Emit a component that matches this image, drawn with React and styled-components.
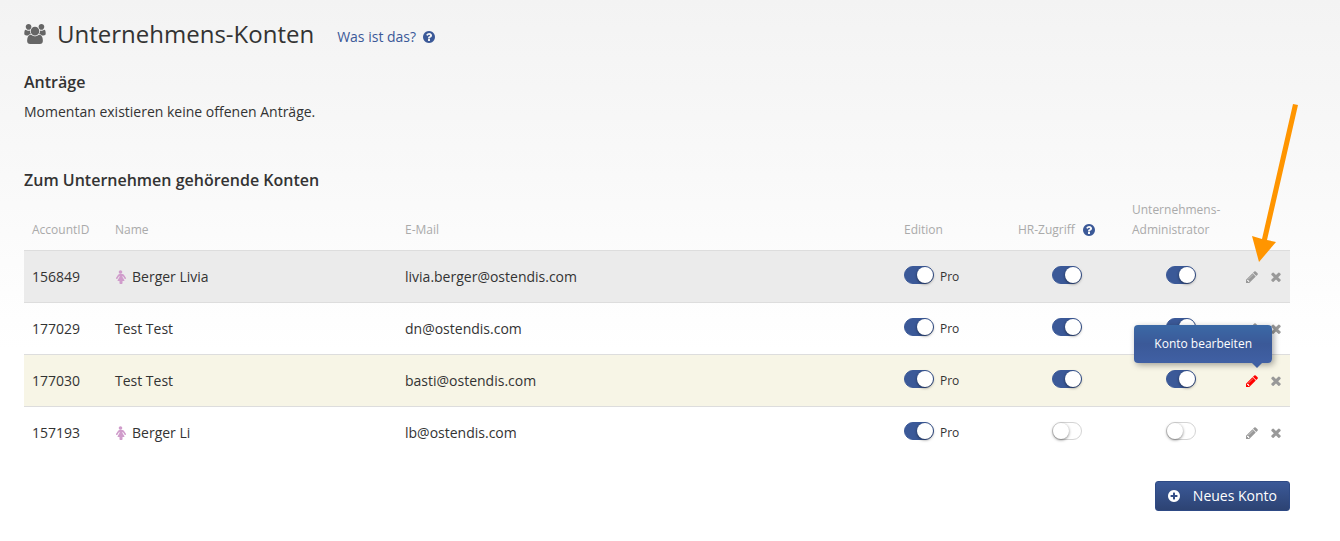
import React, { useState } from "react";
import styled, { createGlobalStyle } from "styled-components";

const GlobalStyle = createGlobalStyle`
  *, *::before, *::after { box-sizing: border-box; }
  html { min-height: 100%; background: #fff; }
  body {
    margin: 0;
    background: linear-gradient(#f3f3f3, #fff 350px) no-repeat;
    color: #333;
    font: 14px/20px "Open Sans", "Liberation Sans", sans-serif;
  }
  button, input { font: inherit; }
`;

const CIRCLE =
  "zm320-64q0 209-103 385.5t-279.5 279.5-385.5 103-385.5-103-279.5-279.5-103-385.5 103-385.5 279.5-279.5 385.5-103 385.5 103 279.5 279.5 103 385.5z";

const PATHS = {
  group:
    "M593 896q-162 5-265 128h-134q-82 0-138-40.5t-56-118.5q0-353 124-353 6 0 43.5 21t97.5 42.5 119 21.5q67 0 133-23-5 37-5 66 0 139 81 256zm1071 637q0 120-73 189.5t-194 69.5h-874q-121 0-194-69.5t-73-189.5q0-53 3.5-103.5t14-109 26.5-108.5 43-97.5 62-81 85.5-53.5 111.5-20q10 0 43 21.5t73 48 107 48 135 21.5 135-21.5 107-48 73-48 43-21.5q61 0 111.5 20t85.5 53.5 62 81 43 97.5 26.5 108.5 14 109 3.5 103.5zm-1024-1277q0 106-75 181t-181 75-181-75-75-181 75-181 181-75 181 75 75 181zm704 384q0 159-112.5 271.5t-271.5 112.5-271.5-112.5-112.5-271.5 112.5-271.5 271.5-112.5 271.5 112.5 112.5 271.5zm576 225q0 78-56 118.5t-138 40.5h-134q-103-123-265-128 81-117 81-256 0-29-5-66 66 23 133 23 59 0 119-21.5t97.5-42.5 43.5-21q124 0 124 353zm-128-609q0 106-75 181t-181 75-181-75-75-181 75-181 181-75 181 75 75 181z",
  help:
    "M1024 1376v-192q0-14-9-23t-23-9h-192q-14 0-23 9t-9 23v192q0 14 9 23t23 9h192q14 0 23-9t9-23zm256-672q0-88-55.5-163t-138.5-116-170-41q-243 0-371 213-15 24 8 42l132 100q7 6 19 6 16 0 25-12 53-68 86-92 34-24 86-24 48 0 85.5 26t37.5 59q0 38-20 61t-68 45q-63 28-115.5 86.5t-52.5 125.5v36q0 14 9 23t23 9h192q14 0 23-9t9-23q0-19 21.5-49.5t54.5-49.5q32-18 49-28.5t46-35 44.5-48 28-60.5 12.5-81zm384 192q0 209-103 385.5t-279.5 279.5-385.5 103-385.5-103-279.5-279.5-103-385.5 103-385.5 279.5-279.5 385.5-103 385.5 103 279.5 279.5 103 385.5z",
  plus:
    "M1344 960v-128q0-26-19-45t-45-19h-256v-256q0-26-19-45t-45-19h-128q-26 0-45 19t-19 45v256h-256q-26 0-45 19t-19 45v128q0 26 19 45t45 19h256v256q0 26 19 45t45 19h128q26 0 45-19t19-45v-256h256q26 0 45-19t19-45" +
    CIRCLE,
  pencil:
    "M491 1536l91-91-235-235-91 91v107h128v128h107zm523-928q0-22-22-22-10 0-17 7l-542 542q-7 7-7 17 0 22 22 22 10 0 17-7l542-542q7-7 7-17zm-54-192l416 416-832 832h-416v-416zm683 96q0 53-37 90l-166 166-416-416 166-165q36-38 90-38 53 0 91 38l235 234q37 39 37 91z",
  cross:
    "M1490 1322q0 40-28 68l-136 136q-28 28-68 28t-68-28l-294-294-294 294q-28 28-68 28t-68-28l-136-136q-28-28-28-68t28-68l294-294-294-294q-28-28-28-68t28-68l136-136q28-28 68-28t68 28l294 294 294-294q28-28 68-28t68 28l136 136q28 28 28 68t-28 68l-294 294 294 294q28 28 28 68z",
  female:
    "M1600 1056q0 40-28 68t-68 28q-51 0-80-43l-227-341h-45v132l247 411q9 15 9 33 0 26-19 45t-45 19h-192v272q0 46-33 79t-79 33h-160q-46 0-79-33t-33-79v-272h-192q-26 0-45-19t-19-45q0-18 9-33l247-411v-132h-45l-227 341q-29 43-80 43-40 0-68-28t-28-68q0-29 16-53l256-384q73-107 176-107h384q103 0 176 107l256 384q16 24 16 53zm-480-800q0 93-65.5 158.5t-158.5 65.5-158.5-65.5-65.5-158.5 65.5-158.5 158.5-65.5 158.5 65.5 65.5 158.5z",
};

const BOXES = {
  group: "0 0 1920 1792",
  help: "128 128 1536 1536",
  plus: "128 128 1536 1536",
  pencil: "128 128 1536 1536",
  cross: "302 302 1188 1252",
  female: "192 0 1408 1792",
};

const Glyph = styled.svg`
  display: block;
  flex: none;
  width: ${(p) => p.$w}px;
  height: ${(p) => p.$h}px;
  fill: ${(p) => p.$color || "currentColor"};
`;

function Icon({ name, w = 12, h = 12, color }) {
  return (
    <Glyph viewBox={BOXES[name]} $w={w} $h={h} $color={color} aria-hidden="true">
      <path d={PATHS[name]} />
    </Glyph>
  );
}

const Page = styled.main`
  padding: 16px 50px 30px 24px;
`;

const TitleBar = styled.header`
  display: flex;
  align-items: center;
  height: 36px;
  margin-bottom: 18px;
`;

const Title = styled.h1`
  margin: 0 23px 0 11px;
  font-size: 24px;
  line-height: 36px;
  font-weight: 400;
`;

const HelpLink = styled.a`
  display: flex;
  align-items: center;
  gap: 7px;
  padding-top: 6px;
  color: #3b5998;
  text-decoration: none;
`;

const Section = styled.section`
  margin-bottom: ${(p) => p.$gap || 0}px;
`;

const Heading = styled.h2`
  margin: 0 0 8px;
  font-size: 16px;
  line-height: 24px;
  font-weight: 600;
`;

const Text = styled.p`
  margin: 0;
`;

const Table = styled.table`
  width: 100%;
  table-layout: fixed;
  border-collapse: separate;
  border-spacing: 0;
`;

const Col = styled.col`
  width: ${(p) => (p.$w ? `${p.$w}px` : "auto")};
`;

const HeadCell = styled.th`
  padding: 0 8px 10px;
  text-align: left;
  vertical-align: bottom;
  font-size: 12px;
  line-height: 20px;
  font-weight: 400;
  color: #aaa;
`;

const HeadLabel = styled.span`
  display: flex;
  align-items: center;
  gap: 8px;
`;

const tones = {
  grey: "#ebebeb",
  cream: "#f7f5e6",
};

const Row = styled.tr`
  background: ${(p) => tones[p.$tone] || "transparent"};
`;

const Cell = styled.td`
  height: 52px;
  padding: 0 8px;
  border-top: 1px solid #ddd;
  vertical-align: middle;
`;

const Inline = styled.div`
  display: flex;
  align-items: center;
  gap: 6px;
  justify-content: ${(p) => (p.$center ? "center" : "flex-start")};
`;

const Edition = styled.span`
  font-size: 12px;
`;

const Switch = styled.input.attrs({ type: "checkbox", role: "switch" })`
  appearance: none;
  flex: none;
  width: 30px;
  height: 18px;
  margin: 0 0 4px;
  border: 1px solid #d4d4d4;
  border-radius: 9px;
  background: #fff;
  cursor: pointer;

  &::before {
    content: "";
    display: block;
    width: 16px;
    height: 16px;
    border-radius: 8px;
    background: #fff;
    box-shadow: 0 1px 3px rgba(0, 0, 0, 0.5);
  }

  &:checked {
    border-color: #3b5998;
    background: #3b5998;
  }

  &:checked::before {
    margin-left: 12px;
  }
`;

const Actions = styled.div`
  display: flex;
  align-items: center;
  justify-content: space-between;
`;

const IconButton = styled.button`
  position: relative;
  display: flex;
  justify-content: center;
  width: 12px;
  padding: 0;
  border: 0;
  background: none;
  color: ${(p) => (p.$active ? "#f00" : "#999")};
  cursor: pointer;
`;

const Tooltip = styled.span`
  position: absolute;
  z-index: 2;
  right: -14px;
  bottom: calc(100% + 12px);
  padding: 9px 20px;
  border-radius: 4px;
  background: linear-gradient(#3b69a6, #3b5998 50%, #4060a4);
  box-shadow: 2px 2px 6px rgba(0, 0, 0, 0.35);
  color: #fff;
  font-size: 12px;
  line-height: 20px;
  white-space: nowrap;

  &::after {
    content: "";
    position: absolute;
    top: 100%;
    right: 10px;
    border: 5px solid transparent;
    border-top-color: #3f5fa2;
    border-bottom: 0;
  }
`;

const Pointer = styled.svg`
  position: absolute;
  z-index: 3;
  left: 4px;
  bottom: calc(100% + 9px);
  width: 50px;
  height: 160px;
  fill: #ff9500;
  pointer-events: none;
`;

const Footer = styled.footer`
  display: flex;
  justify-content: flex-end;
  padding-top: 23px;
`;

const PrimaryButton = styled.button`
  display: flex;
  align-items: center;
  gap: 13px;
  height: 30px;
  padding: 0 12px;
  border: 1px solid #2e4a85;
  border-radius: 3px;
  background: linear-gradient(#3b5998, #2d4373);
  color: #fff;
  line-height: 20px;
  font-weight: 500;
  cursor: pointer;
`;

const ACCOUNTS = [
  { id: "156849", name: "Berger Livia", female: true, mail: "livia.berger@ostendis.com", hr: true, admin: true, tone: "grey", pointed: true },
  { id: "177029", name: "Test Test", mail: "dn@ostendis.com", hr: true, admin: true },
  { id: "177030", name: "Test Test", mail: "basti@ostendis.com", hr: true, admin: true, tone: "cream", active: true },
  { id: "157193", name: "Berger Li", female: true, mail: "lb@ostendis.com", hr: false, admin: false },
];

function Toggle({ label, initial }) {
  const [on, setOn] = useState(initial);
  return <Switch aria-label={label} checked={on} onChange={() => setOn(!on)} />;
}

function AccountRow({ account }) {
  return (
    <Row $tone={account.tone}>
      <Cell>{account.id}</Cell>
      <Cell>
        <Inline>
          {account.female && <Icon name="female" w={11} h={14} color="#d09ccb" />}
          {account.name}
        </Inline>
      </Cell>
      <Cell>{account.mail}</Cell>
      <Cell>
        <Inline>
          <Toggle label={`Edition Pro ${account.id}`} initial />
          <Edition>Pro</Edition>
        </Inline>
      </Cell>
      <Cell>
        <Inline $center>
          <Toggle label={`HR-Zugriff ${account.id}`} initial={account.hr} />
        </Inline>
      </Cell>
      <Cell>
        <Inline $center>
          <Toggle label={`Unternehmens-Administrator ${account.id}`} initial={account.admin} />
        </Inline>
      </Cell>
      <Cell>
        <Actions>
          <IconButton type="button" aria-label="Konto bearbeiten" $active={account.active}>
            <Icon name="pencil" />
            {account.active && <Tooltip role="tooltip">Konto bearbeiten</Tooltip>}
            {account.pointed && (
              <Pointer viewBox="0 0 50 160" aria-hidden="true">
                <path d="M43 2L48 3L17 138L26 140L9 160L2 134L12 137Z" />
              </Pointer>
            )}
          </IconButton>
          <IconButton type="button" aria-label="Konto entfernen">
            <Icon name="cross" w={10} h={10} />
          </IconButton>
        </Actions>
      </Cell>
    </Row>
  );
}

export default function App() {
  return (
    <>
      <GlobalStyle />
      <Page>
        <TitleBar>
          <Icon name="group" w={22} h={20} color="#666" />
          <Title>Unternehmens-Konten</Title>
          <HelpLink href="#hilfe">
            Was ist das?
            <Icon name="help" />
          </HelpLink>
        </TitleBar>
        <Section $gap={46}>
          <Heading>Anträge</Heading>
          <Text>Momentan existieren keine offenen Anträge.</Text>
        </Section>
        <Section>
          <Heading>Zum Unternehmen gehörende Konten</Heading>
          <Table>
            <colgroup>
              <Col $w={83} />
              <Col $w={290} />
              <Col />
              <Col $w={114} />
              <Col $w={114} />
              <Col $w={114} />
              <Col $w={52} />
            </colgroup>
            <thead>
              <tr>
                <HeadCell scope="col">AccountID</HeadCell>
                <HeadCell scope="col">Name</HeadCell>
                <HeadCell scope="col">E-Mail</HeadCell>
                <HeadCell scope="col">Edition</HeadCell>
                <HeadCell scope="col">
                  <HeadLabel>
                    HR-Zugriff
                    <Icon name="help" color="#3b5998" />
                  </HeadLabel>
                </HeadCell>
                <HeadCell scope="col">Unternehmens-Administrator</HeadCell>
                <HeadCell as="td" />
              </tr>
            </thead>
            <tbody>
              {ACCOUNTS.map((account) => (
                <AccountRow key={account.id} account={account} />
              ))}
            </tbody>
          </Table>
        </Section>
        <Footer>
          <PrimaryButton type="button">
            <Icon name="plus" />
            Neues Konto
          </PrimaryButton>
        </Footer>
      </Page>
    </>
  );
}
